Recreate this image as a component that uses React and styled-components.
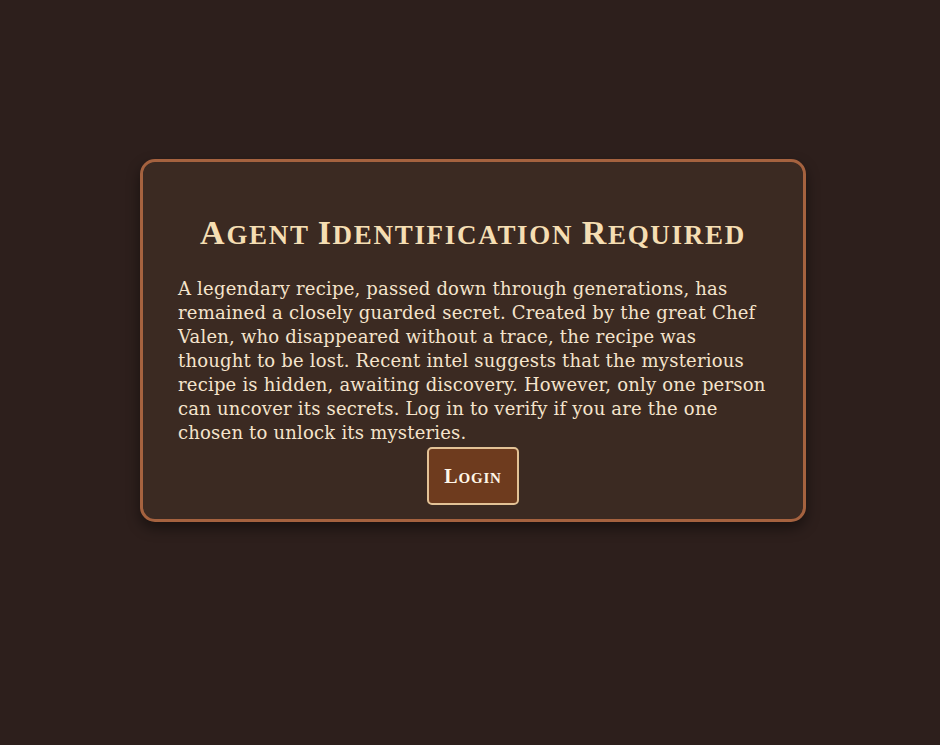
import React from "react";
import styled, { createGlobalStyle } from "styled-components";

const Global = createGlobalStyle`
  html, body { margin: 0; padding: 0; background: #2d1f1c; }
  body { min-height: 745px; }
`;

const Page = styled.main`
  min-height: 745px;
  display: flex;
  justify-content: center;
  align-items: flex-start;
  padding: 159px 0 0 6px;
  box-sizing: border-box;
`;

const Card = styled.section`
  width: 666px;
  box-sizing: border-box;
  background: #3b2a22;
  border: 3px solid #a5623f;
  border-radius: 15px;
  box-shadow: 0 6px 14px rgba(0, 0, 0, 0.45);
  padding: 51px 35px 14px 35px;
  display: flex;
  flex-direction: column;
  align-items: center;
`;

const Title = styled.h1`
  margin: 0 0 22px;
  font-family: "Liberation Serif", "DejaVu Serif", serif;
  text-transform: uppercase;
  font-weight: 700;
  font-size: 27px;
  line-height: 40px;
  letter-spacing: 1.7px;
  color: #f5deb3;
  text-align: center;
`;

const Cap = styled.span`
  font-size: ${(p) => p.$size || 34}px;
`;

const Body = styled.p`
  margin: 0;
  align-self: stretch;
  font-family: "DejaVu Serif", serif;
  font-size: 18px;
  letter-spacing: 0.2px;
  line-height: 24px;
  color: #f5e4cc;
`;

const LoginButton = styled.button`
  margin-top: 2px;
  width: 92px;
  height: 58px;
  background: #6e3b1e;
  border: 2px solid #e3c296;
  border-radius: 5px;
  color: #fff6e8;
  font-family: "Liberation Serif", "DejaVu Serif", serif;
  text-transform: uppercase;
  font-weight: 700;
  font-size: 15px;
  letter-spacing: 0.8px;
  cursor: pointer;
`;

export default function App() {
  return (
    <>
      <Global />
      <Page>
        <Card>
          <Title>
            <Cap>A</Cap>gent <Cap>I</Cap>dentification <Cap>R</Cap>equired
          </Title>
          <Body>
            A legendary recipe, passed down through generations, has remained a
            closely guarded secret. Created by the great Chef Valen, who
            disappeared without a trace, the recipe was thought to be lost.
            Recent intel suggests that the mysterious recipe is hidden, awaiting
            discovery. However, only one person can uncover its secrets. Log in
            to verify if you are the one chosen to unlock its mysteries.
          </Body>
          <LoginButton>
            <Cap $size={20}>L</Cap>ogin
          </LoginButton>
        </Card>
      </Page>
    </>
  );
}
